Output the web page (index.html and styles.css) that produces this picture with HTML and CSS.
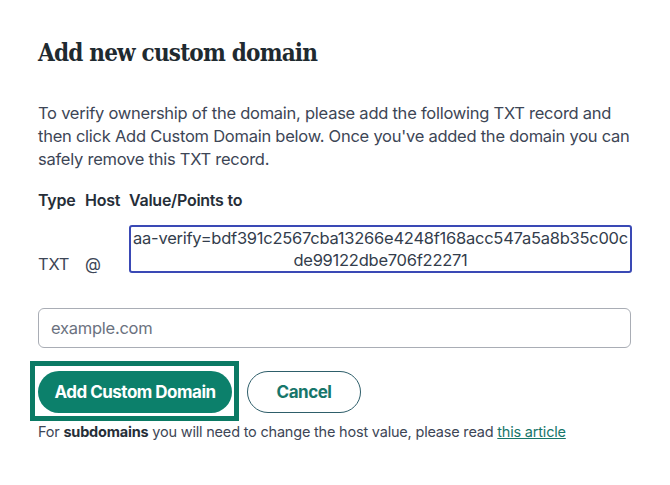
FILE: index.html
```html
<!DOCTYPE html>
<html>
    <head>
        <title>Add new custom domain</title>
        <link rel="stylesheet" href="styles.css">
    </head>
    <body>
        <div id="domainModal">
            <h2>Add new custom domain</h2>
            <p class="intro">To verify ownership of the domain, please add the following TXT record and then click Add Custom Domain below. Once you've added the domain you can safely remove this TXT record.</p>

            <div class="recordHead">
                <span class="colType">Type</span>
                <span class="colHost">Host</span>
                <span>Value/Points to</span>
            </div>
            <div class="recordRow">
                <span class="colType">TXT</span>
                <span class="colHost">@</span>
                <div class="recordValue">aa-verify=bdf391c2567cba13266e4248f168acc547a5a8b35c00cde99122dbe706f22271</div>
            </div>

            <input class="domainInput" type="text" placeholder="example.com">

            <div class="actions">
                <div class="focusRing"><button class="btnPrimary">Add Custom Domain</button></div>
                <button class="btnCancel">Cancel</button>
            </div>
            <p class="note">For <b>subdomains</b> you will need to change the host value, please read <a href="#">this article</a></p>
        </div>
    </body>
</html>
```

FILE: styles.css
```css
body{
    margin:0;
    background-color:white;
    font-family:Inter, "Liberation Sans", sans-serif;
    color:#3b4252;
}
#domainModal{
    padding:38px 38px 0 38px;
}
h2{
    margin:0;
    font-family:"DejaVu Serif", serif;
    font-stretch:condensed;
    font-size:24px;
    line-height:30px;
    font-weight:bold;
    color:#1f2a30;
    letter-spacing:-0.8px;
}
.intro{
    margin:34px 0 0 0;
    font-size:16.5px;
    line-height:23px;
    letter-spacing:-0.25px;
    color:#3d4656;
}
.recordHead{
    display:flex;
    margin-top:18px;
    font-size:16px;
    line-height:23px;
    font-weight:600;
    letter-spacing:-0.25px;
    color:#262e38;
}
.colType{
    width:47px;
}
.colHost{
    width:44px;
}
.recordRow{
    display:flex;
    align-items:flex-end;
    margin-top:13px;
    font-size:16.5px;
    letter-spacing:-0.25px;
    color:#3d4656;
}
.recordRow .colType, .recordRow .colHost{
    line-height:17px;
}
.recordValue{
    flex:1;
    border:2px solid #3a49b5;
    border-radius:3px;
    text-align:center;
    line-height:22px;
    word-break:break-all;
    color:#333d4c;
}
.domainInput{
    display:block;
    box-sizing:border-box;
    width:593px;
    height:40px;
    margin-top:35px;
    padding:0 12px;
    border:1px solid #a9adb5;
    border-radius:6px;
    font-family:inherit;
    font-size:16.5px;
    letter-spacing:-0.25px;
    color:#333;
}
.domainInput::placeholder{
    color:#6b7280;
}
.actions{
    display:flex;
    align-items:flex-start;
    gap:8px;
    margin:13px 0 0 -8px;
}
.focusRing{
    border:5px solid #0b7a64;
    padding:5px 2px 3px 3px;
}
button{
    font-family:inherit;
    font-size:17px;
    font-weight:700;
    letter-spacing:-0.5px;
    height:42px;
    border-radius:21px;
    cursor:pointer;
}
.btnPrimary{
    display:block;
    width:194px;
    background-color:#0c806b;
    color:white;
    border:none;
}
.btnCancel{
    width:114px;
    margin-top:10px;
    background-color:white;
    color:#17766a;
    border:1px solid #2e5e6a;
}
.note{
    margin:2px 0 0 0;
    font-size:14.5px;
    letter-spacing:-0.2px;
    color:#3d4656;
}
.note b{
    color:#262e38;
}
.note a{
    color:#17766a;
}
```
